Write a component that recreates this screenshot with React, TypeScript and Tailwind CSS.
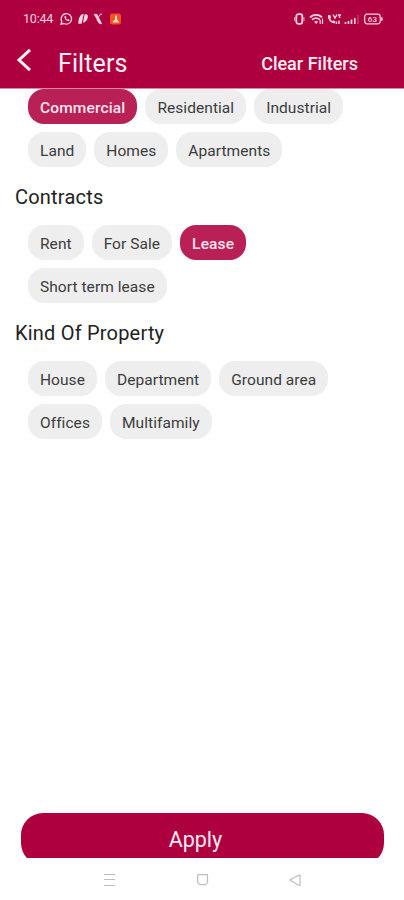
import React, { useState } from 'react';

interface FilterGroup {
  title: string;
  options: string[];
}

const groups: FilterGroup[] = [
  { title: '', options: ['Commercial', 'Residential', 'Industrial', 'Land', 'Homes', 'Apartments'] },
  { title: 'Contracts', options: ['Rent', 'For Sale', 'Lease', 'Short term lease'] },
  { title: 'Kind Of Property', options: ['House', 'Department', 'Ground area', 'Offices', 'Multifamily'] },
];

interface ChipProps {
  label: string;
  active: boolean;
  onClick: () => void;
}

const Chip: React.FC<ChipProps> = ({ label, active, onClick }) => (
  <button
    onClick={onClick}
    className={`h-[35px] rounded-[16px] px-3 pt-1 text-[15.5px] whitespace-nowrap ${
      active ? 'bg-[#b92056] font-medium tracking-[0.15px] text-[#ffe6ef]' : 'bg-[#eeeeee] tracking-[0.06px] text-[#3c3c3c]'
    }`}
  >
    {label}
  </button>
);

const StatusBar = () => (
  <div className="flex h-[37px] items-center justify-between pl-[23px] pr-[20px] text-[#f9d3e0]">
    <div className="flex items-center">
      <span className="w-[37px] pt-px text-[12.5px] tracking-[-0.2px]">10:44</span>
      <svg width="62" height="14" viewBox="0 0 62 14" fill="none" stroke="currentColor">
        {/* WhatsApp */}
        <path d="M1 12.2l.8-2.8A5.2 5.2 0 1 1 4 11.5z" strokeWidth="1.3" />
        <path d="M4.5 4.3c-.5 2.3 1.7 4.9 4.6 4.9l.5-1.3-1.4-.8-.8.6-1.6-1.6.6-.8-.7-1.3z" fill="currentColor" stroke="none" />
        {/* Leaf shaped app icon */}
        <path d="M18.2 11.8l.5-4.2c.8-3.4 2.4-5.6 5.1-5.8l-2.2 10z" fill="currentColor" stroke="none" />
        <path d="M23 10.8l1.6-8.2c2.4-1 3.8.5 3.2 3-.6 2.8-2.4 4.9-4.8 5.2z" fill="currentColor" stroke="none" />
        {/* Missed link */}
        <path d="M34 2.3h3l4.6 9.4h-1.8c-1.6-1-2.6-3-3.1-5.2z" fill="currentColor" strokeWidth="0.7" />
        <path d="M42 2.2h-1.6l-1.7 2.6" strokeWidth="1" />
        {/* Orange badge */}
        <rect x="50" y="1.5" width="11" height="11" rx="2.5" fill="#f4511e" stroke="none" />
        <path d="M55.2 3.5h1.8v3.7l2.2 3.3h-6.4v-1.3l2-1.5z" fill="#ffd8c2" stroke="none" />
      </svg>
    </div>
    <svg width="91" height="14" viewBox="0 0 91 14" fill="none" stroke="currentColor">
      {/* Vibrate */}
      <rect x="3.3" y="2.2" width="6" height="9.6" rx="2" strokeWidth="1.8" />
      <path d="M1.6 5v4M11 5v4" strokeWidth="0.8" />
      {/* Wi-Fi */}
      <path d="M17 5.2c3.7-3 8.5-3 12 0" strokeWidth="2" />
      <path d="M19 7.7c2.4-2 5.5-2 8 0" strokeWidth="1.8" />
      <path d="M21 9.7l2.2 2.3 2-2.3c-1.2-1-3-1-4.2 0z" fill="currentColor" stroke="none" />
      <path d="M27.2 12V8M29.5 12V6.5" strokeWidth="1.2" />
      {/* Call over data */}
      <path d="M35 3c-.5 4.5 2.8 8.5 7.2 8.5V9l-2.2-.6-.8.8-2-2.4.8-1L37.3 3z" fill="currentColor" stroke="none" />
      <path d="M40 2.5l2 3.5 2-3.5M45 3h3M46.5 3v3M43.5 12V9.5M46 12V8.5" strokeWidth="1.4" />
      {/* Signal */}
      <path d="M52.5 12v-2M55.5 12V9M58.5 12V7.5" strokeWidth="1.7" />
      <path d="M61.8 12V6" strokeWidth="1.6" />
      <path d="M65 12V3" strokeWidth="1.2" opacity="0.35" />
      {/* Battery */}
      <rect x="71.7" y="2.2" width="15.5" height="9.6" rx="2.5" strokeWidth="1.2" />
      <path d="M88.7 5.3v3.4" strokeWidth="1.8" />
      <text x="79.4" y="10" fontSize="8" fontWeight="500" textAnchor="middle" fill="currentColor" stroke="none">
        63
      </text>
    </svg>
  </div>
);

const App: React.FC = () => {
  const [selected, setSelected] = useState<string[]>(['Commercial', 'Lease']);

  const toggle = (option: string) => {
    setSelected(prev => (prev.includes(option) ? prev.filter(o => o !== option) : [...prev, option]));
  };

  return (
    <div className="flex h-[900px] w-[404px] flex-col overflow-hidden bg-white font-['Roboto',sans-serif]">
      {/* Header */}
      <header className="h-[89px] shrink-0 border-b border-[#dc86a5] bg-[#ae003f]">
        <StatusBar />
        <div className="flex h-[51px] items-center pl-[16px] pr-[46px] text-[#fff0f5]">
          <button className="mb-[6px]" aria-label="Back">
            <svg width="16" height="24" viewBox="0 0 16 24" fill="none" stroke="currentColor" strokeWidth="3">
              <path d="M14 1.8L3 12l11 10.2" />
            </svg>
          </button>
          <h1 className="ml-[26px] pt-[2px] text-[25px] leading-[30px] tracking-[0.1px]">Filters</h1>
          <button className="ml-auto pt-px text-[18px] font-medium" onClick={() => setSelected([])}>
            Clear Filters
          </button>
        </div>
      </header>

      {/* Filter groups */}
      <main className="flex-1">
        {groups.map(group => (
          <section key={group.options[0]}>
            {group.title && (
              <h2 className="flex h-[58px] items-center pl-[15px] pt-px text-[20px] tracking-[0.2px] text-[#222222]">
                {group.title}
              </h2>
            )}
            <div className="flex flex-wrap gap-2 pl-[28px] pr-[50px]">
              {group.options.map(option => (
                <Chip key={option} label={option} active={selected.includes(option)} onClick={() => toggle(option)} />
              ))}
            </div>
          </section>
        ))}
      </main>

      {/* Apply button, cut off by the navigation bar */}
      <div className="h-[45px] shrink-0 overflow-hidden pl-[21px] pr-[20px]">
        <button className="h-[52px] w-full rounded-[22px] bg-[#ae003f] pr-[14px] pt-[3px] text-[21.5px] text-[#ffeaf1]">
          Apply
        </button>
      </div>

      {/* System navigation bar */}
      <nav className="h-[42px] shrink-0 pl-[103px]">
        <svg width="200" height="42" viewBox="0 0 200 42" fill="none" stroke="#bdbdbd" strokeWidth="1.2">
          <path d="M1 16.5h11M1 21.5h11M1 27.5h11" />
          <path d="M94.7 16.7h9.8v8l-2 2h-5.8l-2-2z" strokeLinejoin="round" />
          <path d="M197 17v10.5l-2-.5-8-5 8-4.5z" strokeLinejoin="round" />
        </svg>
      </nav>
    </div>
  );
};

export default App;
